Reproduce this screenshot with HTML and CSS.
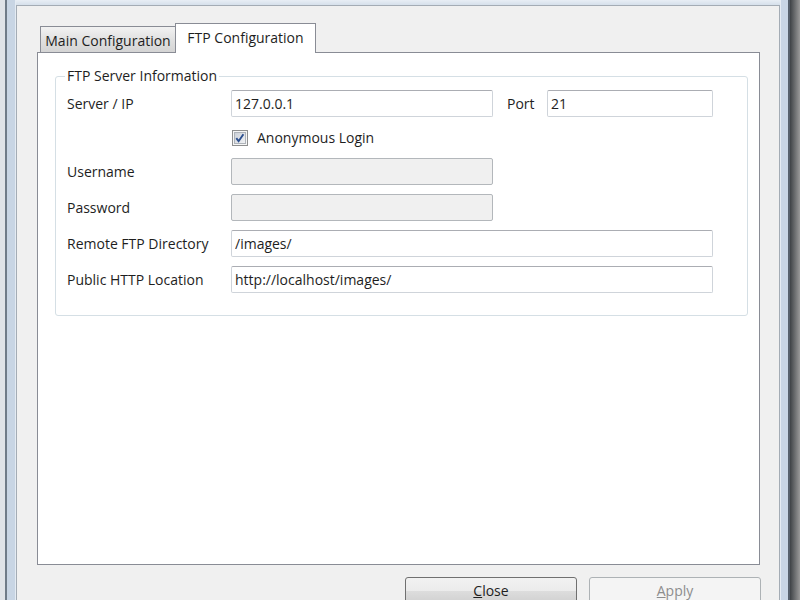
FILE: index.html
```html
<!DOCTYPE html>
<html lang="en">
<head>
    <meta charset="UTF-8">
    <title>FTP Configuration</title>
    <link rel="stylesheet" href="styles.css">
</head>
<body>
    <div class="window">
        <div class="frame-left"></div>
        <div class="middle">
            <div class="frame-top"></div>
            <div class="client">
                <!-- Tab control -->
                <div class="tab-control">
                    <div class="tabs">
                        <div class="tab">Main Configuration</div>
                        <div class="tab active">FTP Configuration</div>
                    </div>
                    <div class="tab-page">
                        <fieldset class="group">
                            <legend>FTP Server Information</legend>
                            <div class="row">
                                <label class="field-label">Server / IP</label>
                                <input class="text-box short" type="text" value="127.0.0.1">
                                <label class="port-label">Port</label>
                                <input class="text-box port" type="text" value="21">
                            </div>
                            <div class="row check-row">
                                <span class="check-box">
                                    <svg width="16" height="16" viewBox="0 0 16 16">
                                        <defs>
                                            <linearGradient id="cb" x1="0" y1="0" x2="1" y2="1">
                                                <stop offset="0" stop-color="#c9ced6"/>
                                                <stop offset="1" stop-color="#f3f4f6"/>
                                            </linearGradient>
                                        </defs>
                                        <rect x="0.5" y="0.5" width="15" height="15" fill="#f6f6f6" stroke="#8e8f8f"/>
                                        <rect x="2.5" y="2.5" width="11" height="11" fill="url(#cb)" stroke="#aeb3b9"/>
                                        <path d="M4.3 8.2 L6.6 11.2 L11.4 4.3" fill="none" stroke="#2c4f8e" stroke-width="1.9"/>
                                    </svg>
                                </span>
                                <span>Anonymous Login</span>
                            </div>
                            <div class="row">
                                <label class="field-label">Username</label>
                                <input class="text-box short" type="text" disabled>
                            </div>
                            <div class="row">
                                <label class="field-label">Password</label>
                                <input class="text-box short" type="password" disabled>
                            </div>
                            <div class="row">
                                <label class="field-label">Remote FTP Directory</label>
                                <input class="text-box long" type="text" value="/images/">
                            </div>
                            <div class="row">
                                <label class="field-label">Public HTTP Location</label>
                                <input class="text-box long" type="text" value="http://localhost/images/">
                            </div>
                        </fieldset>
                    </div>
                </div>

                <!-- Dialog buttons -->
                <div class="buttons">
                    <button class="btn"><u>C</u>lose</button>
                    <button class="btn" disabled><u>A</u>pply</button>
                </div>
            </div>
        </div>
        <div class="frame-right"></div>
    </div>
</body>
</html>
```

FILE: styles.css
```css
* {
    margin: 0;
    padding: 0;
    box-sizing: border-box;
}

body {
    font-family: 'Open Sans', 'Noto Sans', sans-serif;
    font-size: 14px;
    color: #1e1e1e;
    overflow: hidden;
}

.window {
    width: 800px;
    height: 600px;
    display: flex;
    overflow: hidden;
}

/* Window frame pieces */
.frame-left {
    width: 16px;
    flex-shrink: 0;
    background: linear-gradient(to right, #dfe3e8 0 5px, #6f7b88 5px 7px, #c8d5e4 7px 15px, #e4ebf3 15px 16px);
}

.frame-right {
    width: 20px;
    flex-shrink: 0;
    background: linear-gradient(to right, #e6edf4 0 1px, #c9d6e5 1px 8px, #58626d 8px 10px, #3e4246 10px, #9a9a9a 20px);
}

.middle {
    flex: 1;
    min-width: 0;
    display: flex;
    flex-direction: column;
}

.frame-top {
    height: 5px;
    flex-shrink: 0;
    background: linear-gradient(to bottom, #e8eef5, #d6e0eb);
}

.client {
    flex: 1;
    min-height: 0;
    overflow: hidden;
    background-color: #f0f0f0;
    border: 1px solid #a4acb5;
    border-bottom: none;
    padding: 17px 18px 0 20px;
}

/* Tabs */
.tab-control {
    margin-right: 1px;
}

.tabs {
    display: flex;
    align-items: flex-end;
    height: 29px;
    padding-left: 3px;
}

.tab {
    height: 26px;
    width: 136px;
    margin-right: -1px;
    border: 1px solid #898c95;
    border-bottom: none;
    background: linear-gradient(to bottom, #f2f2f2, #e1e1e1 50%, #d4d4d4);
    display: flex;
    align-items: center;
    justify-content: center;
    padding-top: 1px;
}

.tab.active {
    position: relative;
    z-index: 1;
    height: 30px;
    width: 141px;
    margin-bottom: -1px;
    background: #ffffff;
    padding-top: 0;
    padding-bottom: 2px;
}

.tab-page {
    height: 513px;
    background: #ffffff;
    border: 1px solid #898c95;
    padding: 15px 11px 0 17px;
}

/* Group box */
.group {
    border: 1px solid #d5dfe5;
    border-radius: 3px;
    padding: 6px 11px 22px 11px;
}

.group legend {
    line-height: 16px;
    padding: 0 2px;
    margin-left: -2px;
}

.row {
    display: flex;
    align-items: center;
    height: 27px;
    margin-bottom: 9px;
}

.row:last-child {
    margin-bottom: 0;
}

.field-label {
    width: 164px;
}

.port-label {
    width: 40px;
    margin-left: 14px;
}

.text-box {
    height: 27px;
    font-family: 'Open Sans', 'Noto Sans', sans-serif;
    font-size: 14px;
    color: #1e1e1e;
    padding: 0 3px;
    border: 1px solid #cfd4da;
    border-top-color: #abadb3;
    border-radius: 2px;
    background: #ffffff;
    outline: none;
}

.text-box:disabled {
    background: #f0f0f0;
    border-color: #b3b7bb;
}

.text-box.short {
    width: 262px;
}

.text-box.port {
    width: 166px;
}

.text-box.long {
    width: 482px;
}

.check-row {
    height: 23px;
    padding-left: 165px;
}

.check-box {
    width: 16px;
    height: 16px;
    margin-right: 9px;
    display: flex;
}

/* Dialog buttons */
.buttons {
    display: flex;
    justify-content: flex-end;
    gap: 12px;
    margin-top: 12px;
}

.btn {
    width: 172px;
    height: 28px;
    flex-shrink: 0;
    font-family: 'Open Sans', 'Noto Sans', sans-serif;
    font-size: 14px;
    color: #1e1e1e;
    border: 1px solid #707070;
    border-radius: 3px;
    background: linear-gradient(to bottom, #f2f2f2 0%, #ebebeb 50%, #dddddd 50%, #cfcfcf 100%);
    padding-bottom: 2px;
}

.btn:disabled {
    color: #8d8d8d;
    border-color: #adb2b5;
    background: #f4f4f4;
}
```
